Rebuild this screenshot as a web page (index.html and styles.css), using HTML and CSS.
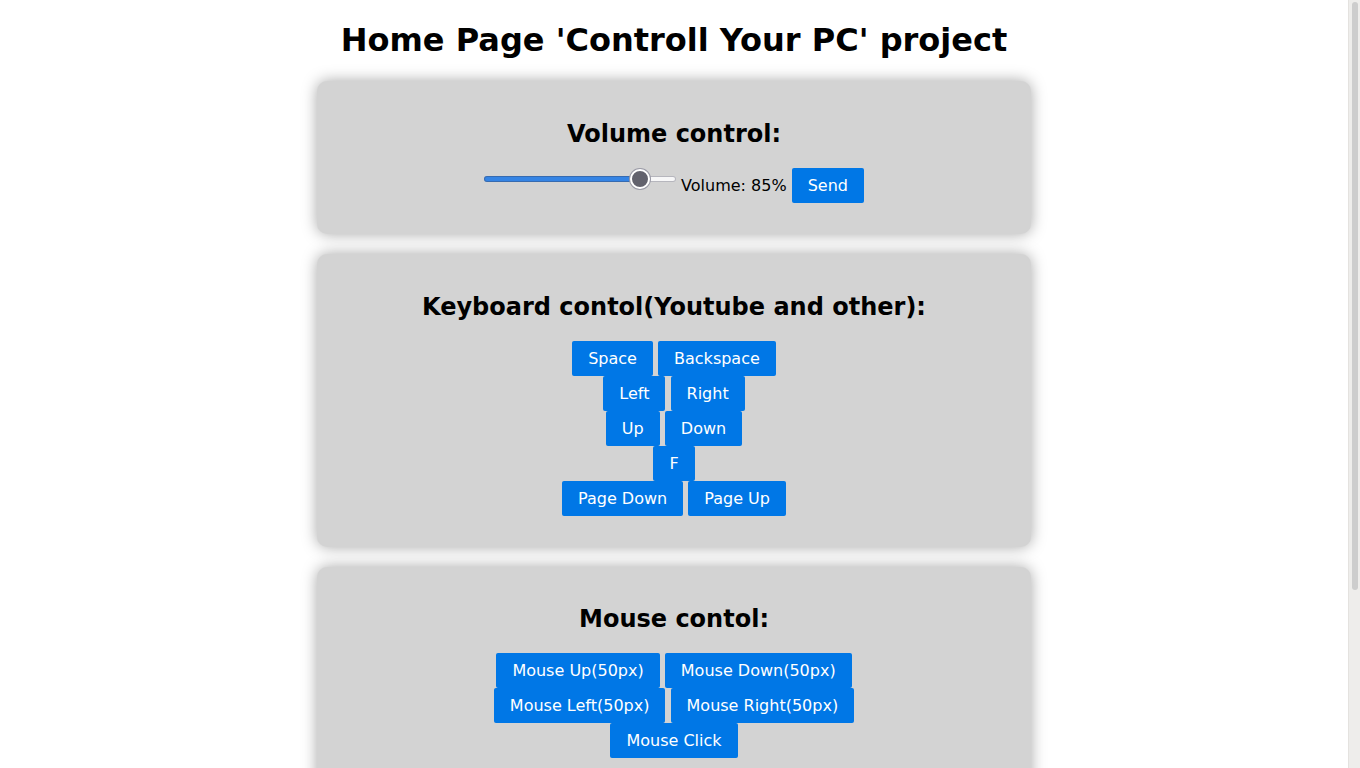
FILE: index.html
```html
<!DOCTYPE html>
<html lang="en">
<head>
<meta charset="utf-8">
<title>Controll Your PC</title>
<link rel="stylesheet" href="styles.css">
</head>
<body>
<div class="page">
  <h1 class="title">Home Page 'Controll Your PC' project</h1>

  <section class="card">
    <h2 class="card-title">Volume control:</h2>
    <div class="volume-row">
      <input class="volume-slider" type="range" min="0" max="100" value="85">
      <span class="volume-label">Volume: 85%</span>
      <button class="btn">Send</button>
    </div>
  </section>

  <section class="card">
    <h2 class="card-title">Keyboard contol(Youtube and other):</h2>
    <div class="btn-row"><button class="btn">Space</button> <button class="btn">Backspace</button></div>
    <div class="btn-row"><button class="btn">Left</button> <button class="btn">Right</button></div>
    <div class="btn-row"><button class="btn">Up</button> <button class="btn">Down</button></div>
    <div class="btn-row"><button class="btn">F</button></div>
    <div class="btn-row"><button class="btn">Page Down</button> <button class="btn">Page Up</button></div>
  </section>

  <section class="card">
    <h2 class="card-title">Mouse contol:</h2>
    <div class="btn-row"><button class="btn">Mouse Up(50px)</button> <button class="btn">Mouse Down(50px)</button></div>
    <div class="btn-row"><button class="btn">Mouse Left(50px)</button> <button class="btn">Mouse Right(50px)</button></div>
    <div class="btn-row"><button class="btn">Mouse Click</button></div>
  </section>
</div>
<div class="scrollbar" aria-hidden="true"><div class="scrollbar-thumb"></div></div>
</body>
</html>
```
FILE: styles.css
```css
html {
  background: #ffffff;
}

body {
  margin: 0 20px 8px 8px;
  font-family: "DejaVu Sans", Verdana, sans-serif;
  color: #000;
}

.page {
  padding-bottom: 200px;
}

.title {
  font-size: 32px;
  font-weight: bold;
  text-align: center;
  margin: 21.44px 0;
}

.card {
  width: 50%;
  margin: 0 auto 20px;
  padding: 19px 24px 31px;
  background: #d3d3d3;
  border-radius: 10px;
  box-shadow: 0 0 15px rgba(0, 0, 0, 0.35);
  text-align: center;
}

.card-title {
  font-size: 24px;
  font-weight: bold;
  margin: 19.92px 0;
}

.volume-row {
  display: flex;
  justify-content: center;
  align-items: center;
  gap: 5px;
}

.volume-label {
  font-size: 16px;
}

.volume-slider {
  -webkit-appearance: none;
  appearance: none;
  width: 192px;
  height: 20px;
  margin: 0 0 12px 0;
  padding: 0;
  background: transparent;
}

.volume-slider::-webkit-slider-runnable-track {
  height: 6px;
  border: none;
  border-radius: 3px;
  background: linear-gradient(to right, #3584e4 0, #3584e4 81%, #f7f7f8 81%, #f7f7f8 100%);
  box-shadow: inset 0 0 0 1px rgba(60, 60, 80, 0.35);
}

.volume-slider::-webkit-slider-thumb {
  -webkit-appearance: none;
  appearance: none;
  box-sizing: border-box;
  width: 20px;
  height: 20px;
  margin-top: -7px;
  border-radius: 50%;
  background: #62626d;
  border: 2px solid #ffffff;
  box-shadow: 0 0 0 1px #9a9aa6;
}

.btn-row {
  text-align: center;
}

.btn {
  display: inline-block;
  font-family: "DejaVu Sans", Verdana, sans-serif;
  font-size: 16px;
  color: #ffffff;
  background: #0077e6;
  border: none;
  border-radius: 2px;
  padding: 8px 16px;
  margin: 0;
  line-height: normal;
  cursor: pointer;
}

.scrollbar {
  position: fixed;
  top: 0;
  right: 0;
  bottom: 0;
  width: 12px;
  box-sizing: border-box;
  background: #eeedeb;
  border-left: 1px solid #e4e2df;
  padding: 2px 2px 0 3px;
}

.scrollbar-thumb {
  height: 588px;
  background: #cdcdcd;
  border-radius: 4px;
}
```
